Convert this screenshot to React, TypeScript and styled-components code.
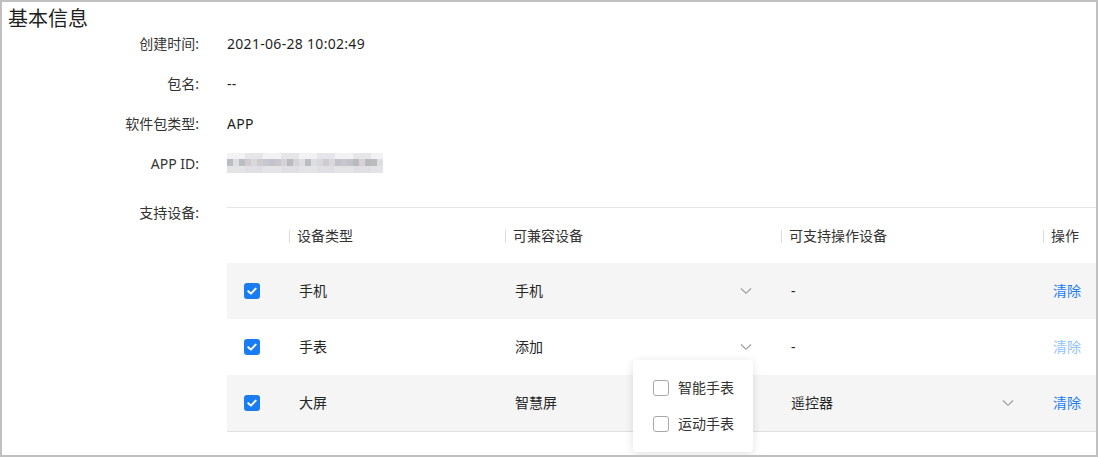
import React from "react";
import styled, { createGlobalStyle } from "styled-components";

const GlobalStyle = createGlobalStyle`
  html, body { margin: 0; padding: 0; background: #fff; }
  body { font-family: "Noto Sans", "Noto Sans CJK SC", sans-serif; }
  * { box-sizing: border-box; }
`;

const Frame = styled.div`
  width: 1098px;
  height: 457px;
  border: 2px solid #c0c0c0;
  overflow: hidden;
  background: #fff;
  color: #262626;
`;

const Title = styled.h1`
  margin: 0;
  padding: 6px 6px 3px;
  font-size: 20px;
  line-height: 22px;
  font-weight: 400;
  color: #1f1f1f;
`;

const InfoRow = styled.div`
  display: grid;
  grid-template-columns: 197px 1fr;
  column-gap: 28px;
  font-size: 14px;
  line-height: 22px;
  padding-bottom: 18px;
`;

const Label = styled.div<{ $top?: number }>`
  text-align: right;
  color: #333;
  padding-top: ${(p) => p.$top ?? 0}px;
`;

const Value = styled.div`
  color: #1f1f1f;
  letter-spacing: 0.3px;
`;

const DeviceSection = styled.div`
  display: grid;
  grid-template-columns: 197px 1fr;
  column-gap: 28px;
  font-size: 14px;
  line-height: 22px;
`;

const Table = styled.div`
  margin-top: 14px;
  border-top: 1px solid #e6e6e6;
  border-bottom: 1px solid #e0e0e0;
`;

const Row = styled.div<{ $striped?: boolean; $head?: boolean }>`
  display: grid;
  grid-template-columns: 62px 216px 276px 262px 1fr;
  height: ${(p) => (p.$head ? 55 : 56)}px;
  align-items: center;
  background: ${(p) => (p.$striped ? "#f5f5f5" : "#fff")};
`;

const HeadCell = styled.div<{ $sep?: boolean }>`
  position: relative;
  height: 100%;
  display: flex;
  align-items: center;
  padding-left: 8px;
  color: #333;
  &::before {
    content: "";
    display: ${(p) => (p.$sep ? "block" : "none")};
    position: absolute;
    left: 0;
    top: 22px;
    width: 1px;
    height: 13px;
    background: #dcdcdc;
  }
`;

const Cell = styled.div<{ $pad?: number }>`
  position: relative;
  height: 100%;
  display: flex;
  align-items: center;
  padding-left: ${(p) => p.$pad ?? 10}px;
`;

const CheckCell = styled.div`
  height: 100%;
  display: flex;
  align-items: center;
  padding-left: 17px;
`;

const CheckBox = styled.span<{ $checked?: boolean; $size?: number }>`
  display: inline-flex;
  align-items: center;
  justify-content: center;
  width: ${(p) => p.$size ?? 16}px;
  height: ${(p) => p.$size ?? 16}px;
  border-radius: 3px;
  background: ${(p) => (p.$checked ? "#1a7cf5" : "#fff")};
  border: ${(p) => (p.$checked ? "none" : "1px solid #a8a8a8")};
`;

const SelectBox = styled.div`
  display: flex;
  align-items: center;
  justify-content: space-between;
  width: calc(100% - 29px);
`;

const Chevron = styled.svg`
  width: 12px;
  height: 8px;
  flex: none;
`;

const LinkText = styled.span<{ $disabled?: boolean }>`
  color: ${(p) => (p.$disabled ? "#8fc3fb" : "#1a7cf5")};
  cursor: pointer;
`;

const Popup = styled.div`
  position: absolute;
  left: 128px;
  top: 41px;
  width: 120px;
  height: 92px;
  background: #fff;
  border-radius: 4px;
  box-shadow: 0 2px 10px rgba(0, 0, 0, 0.12);
  padding: 17px 0 0 20px;
  z-index: 5;
`;

const Option = styled.label`
  display: flex;
  align-items: center;
  gap: 9px;
  height: 22px;
  margin-bottom: 14px;
  color: #333;
  font-size: 14px;
`;

const BlurBox = styled.svg`
  display: block;
`;

const Check = () => (
  <svg width="12" height="12" viewBox="0 0 12 12">
    <polyline points="2.3,6.2 4.9,8.6 9.7,3.6" fill="none" stroke="#fff" strokeWidth="2" strokeLinecap="round" strokeLinejoin="round" />
  </svg>
);

const Down = () => (
  <Chevron viewBox="0 0 12 8">
    <polyline points="1,1.5 6,6.3 11,1.5" fill="none" stroke="#9a9a9a" strokeWidth="1.1" />
  </Chevron>
);

const blurCols = 26;
const palettes = [
  ["#f2f2f4", "#eaeaed", "#f6f5f5", "#e6e6ea", "#efeff1", "#f8f8f8"],
  ["#cfcbd2", "#c2c2ca", "#d6d2d8", "#bcbdc2", "#d9d8da", "#c8c6ce", "#b8babc", "#dedde0"],
  ["#e4e4e7", "#d9d9de", "#ebe9ec", "#e0dfe3", "#d2d3d6", "#efeff1"],
];

const BlurredId = () => {
  const rects: React.ReactNode[] = [];
  const rowsY = [0, 6, 13];
  const rowsH = [6, 7, 7];
  for (let r = 0; r < 3; r++) {
    for (let c = 0; c < blurCols; c++) {
      const pal = palettes[r];
      const color = pal[(c * 7 + r * 3 + (c % 3) * 5) % pal.length];
      rects.push(
        <rect key={`${r}-${c}`} x={c * 6} y={rowsY[r]} width={6} height={rowsH[r]} fill={color} />
      );
    }
  }
  return (
    <BlurBox width={156} height={20} viewBox="0 0 156 20">
      {rects}
    </BlurBox>
  );
};

export default function App() {
  return (
    <>
      <GlobalStyle />
      <Frame>
        <Title>基本信息</Title>
        <InfoRow>
          <Label>创建时间:</Label>
          <Value>2021-06-28 10:02:49</Value>
        </InfoRow>
        <InfoRow>
          <Label>包名:</Label>
          <Value>--</Value>
        </InfoRow>
        <InfoRow>
          <Label>软件包类型:</Label>
          <Value>APP</Value>
        </InfoRow>
        <InfoRow>
          <Label>APP ID:</Label>
          <Value>
            <BlurredId />
          </Value>
        </InfoRow>
        <DeviceSection>
          <Label $top={9}>支持设备:</Label>
          <Table>
            <Row $head>
              <HeadCell />
              <HeadCell $sep>设备类型</HeadCell>
              <HeadCell $sep>可兼容设备</HeadCell>
              <HeadCell $sep>可支持操作设备</HeadCell>
              <HeadCell $sep>操作</HeadCell>
            </Row>
            <Row $striped>
              <CheckCell>
                <CheckBox $checked>
                  <Check />
                </CheckBox>
              </CheckCell>
              <Cell>手机</Cell>
              <Cell>
                <SelectBox>
                  <span>手机</span>
                  <Down />
                </SelectBox>
              </Cell>
              <Cell>-</Cell>
              <Cell>
                <LinkText>清除</LinkText>
              </Cell>
            </Row>
            <Row>
              <CheckCell>
                <CheckBox $checked>
                  <Check />
                </CheckBox>
              </CheckCell>
              <Cell>手表</Cell>
              <Cell>
                <SelectBox>
                  <span>添加</span>
                  <Down />
                </SelectBox>
                <Popup>
                  <Option>
                    <CheckBox $size={16} />
                    智能手表
                  </Option>
                  <Option>
                    <CheckBox $size={16} />
                    运动手表
                  </Option>
                </Popup>
              </Cell>
              <Cell>-</Cell>
              <Cell>
                <LinkText $disabled>清除</LinkText>
              </Cell>
            </Row>
            <Row $striped>
              <CheckCell>
                <CheckBox $checked>
                  <Check />
                </CheckBox>
              </CheckCell>
              <Cell>大屏</Cell>
              <Cell>智慧屏</Cell>
              <Cell>
                <SelectBox>
                  <span>遥控器</span>
                  <Down />
                </SelectBox>
              </Cell>
              <Cell>
                <LinkText>清除</LinkText>
              </Cell>
            </Row>
          </Table>
        </DeviceSection>
      </Frame>
    </>
  );
}
